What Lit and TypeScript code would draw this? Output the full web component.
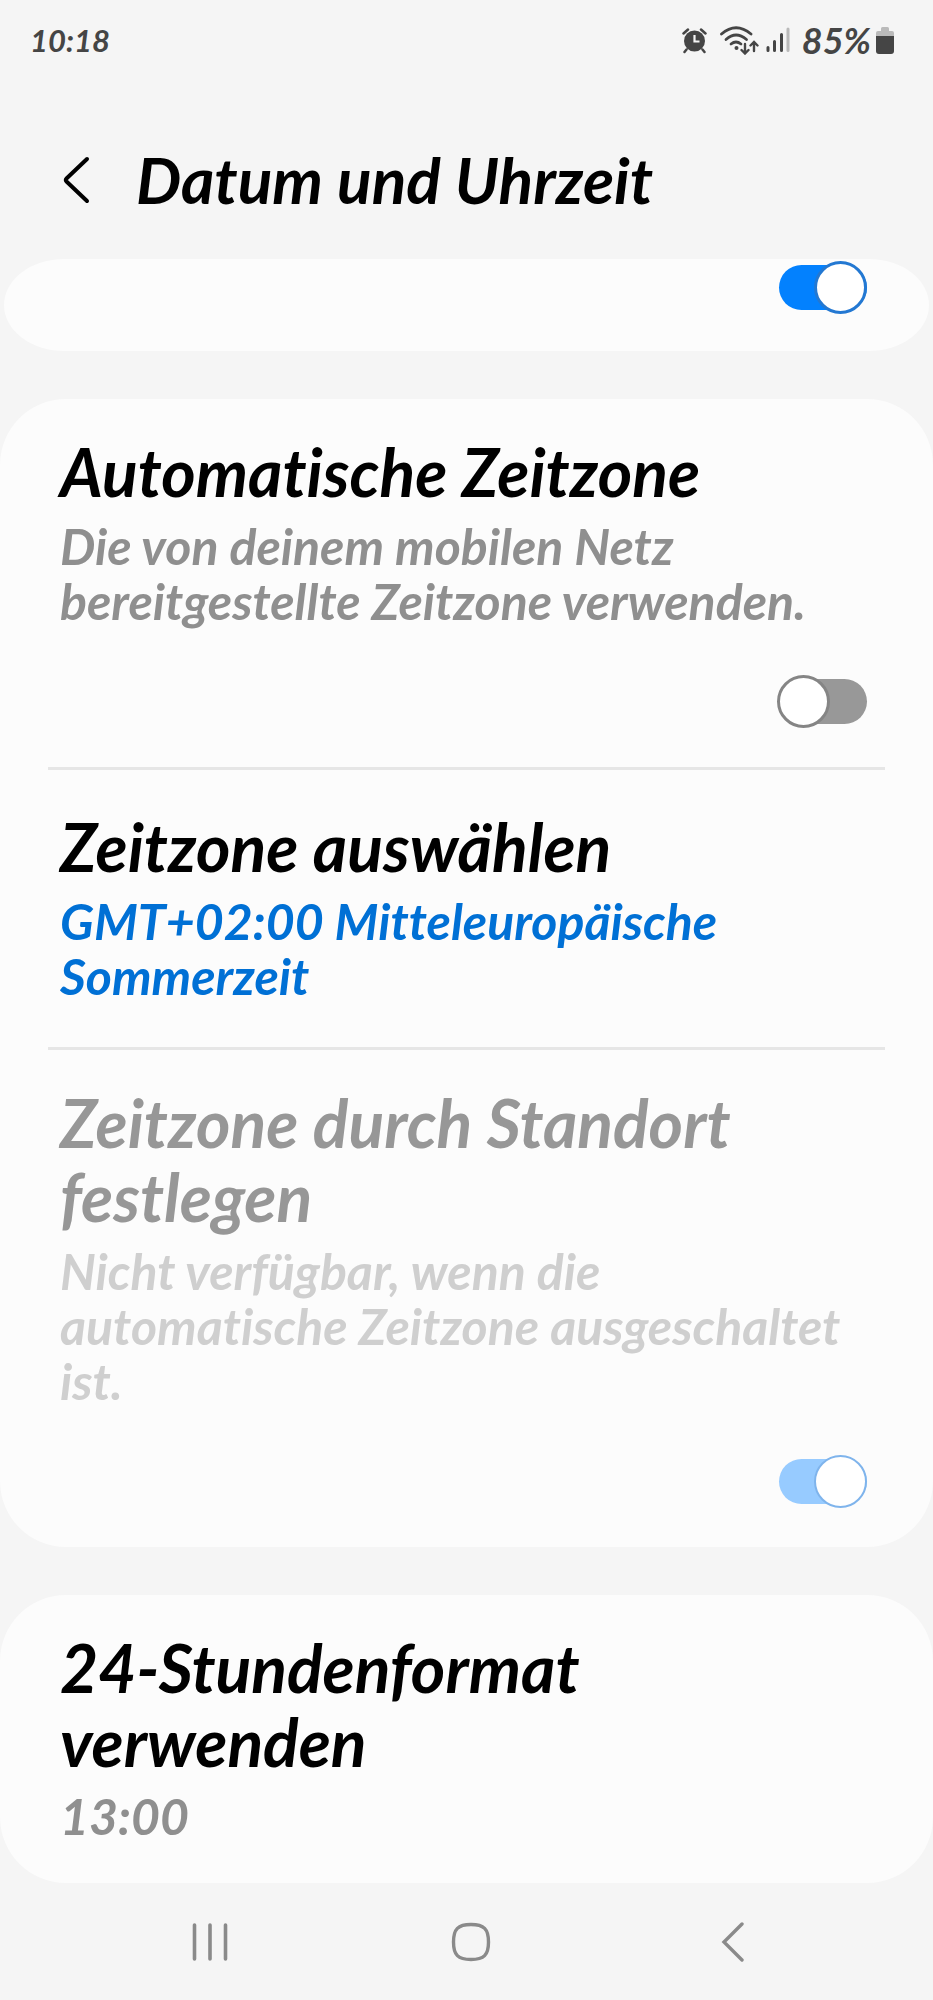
import { LitElement, html, css, svg } from "lit";
import { customElement, property } from "lit/decorators.js";
import { classMap } from "lit/directives/class-map.js";

@customElement("toggle-switch")
class ToggleSwitch extends LitElement {
  @property({ type: Boolean }) checked = false;
  @property({ type: Boolean }) disabled = false;
  @property() label = "";

  static styles = css`
    :host {
      display: block;
    }
    .switch {
      position: relative;
      display: flex;
      justify-content: flex-start;
      align-items: center;
      box-sizing: border-box;
      width: 90px;
      height: 53px;
      margin: 0;
      appearance: none;
      background: none;
      cursor: pointer;
    }
    .switch::before {
      content: "";
      position: absolute;
      inset: 4px 0 4px 2px;
      border-radius: 23px;
      background: #989898;
    }
    .switch::after {
      content: "";
      position: relative;
      box-sizing: border-box;
      width: 53px;
      height: 53px;
      border: 3px solid #858585;
      border-radius: 50%;
      background: #fff;
    }
    .switch:checked {
      justify-content: flex-end;
    }
    .switch:checked::before {
      background: #0381fe;
    }
    .switch:checked::after {
      border-color: #2378d2;
    }
    .switch:disabled {
      cursor: default;
    }
    .switch:disabled::before {
      background: #97cbff;
    }
    .switch:disabled::after {
      border: 2px solid #7fb4ec;
    }
  `;

  render() {
    return html`<input
      class="switch"
      type="checkbox"
      role="switch"
      aria-label=${this.label}
      .checked=${this.checked}
      ?disabled=${this.disabled}
    />`;
  }
}

@customElement("setting-row")
class SettingRow extends LitElement {
  @property() heading = "";
  @property() summary = "";
  @property({ type: Boolean }) accent = false;
  @property({ type: Boolean }) disabled = false;
  @property({ type: Boolean }) roomy = false;
  /** "on", "off", or empty for a row without a switch */
  @property() toggle = "";

  static styles = css`
    :host {
      display: block;
    }
    .row {
      display: flex;
      flex-direction: column;
      box-sizing: border-box;
      width: 100%;
      padding: 36px 66px 39px 60px;
      border: 0;
      background: none;
      color: #000;
      font: inherit;
      text-align: left;
    }
    .roomy {
      padding-top: 40px;
      padding-bottom: 43px;
    }
    .heading {
      font-size: 66px;
      font-weight: 700;
      line-height: 74px;
    }
    .summary {
      margin-top: 10px;
      color: #8f8f8f;
      font-size: 50px;
      font-weight: 700;
      line-height: 55px;
    }
    .accent .summary {
      color: #0070d5;
    }
    .disabled .heading {
      color: #979797;
    }
    .disabled .summary {
      color: #cfcfcf;
    }
    .toggle {
      align-self: flex-end;
      margin-top: 46px;
    }
  `;

  render() {
    const classes = classMap({
      row: true,
      accent: this.accent,
      disabled: this.disabled,
      roomy: this.roomy,
    });
    const text = html`<span class="heading">${this.heading}</span>
      <span class="summary">${this.summary}</span>`;
    if (!this.toggle) {
      return html`<button class=${classes} type="button">${text}</button>`;
    }
    return html`<div class=${classes}>
      ${text}
      <toggle-switch
        class="toggle"
        label=${this.heading}
        ?checked=${this.toggle === "on"}
        ?disabled=${this.disabled}
      ></toggle-switch>
    </div>`;
  }
}

const alarmIcon = svg`
  <circle cx="12.5" cy="14" r="10.5" fill="#454545"/>
  <path d="M1.5 6.5 6 2.5M23.5 6.5 19 2.5M4.5 22.5 2.5 25M20.5 22.5 22.5 25" stroke="#454545" stroke-width="2.5" stroke-linecap="round"/>
  <path d="M12.5 8v6.500h5" stroke="#f5f5f5" stroke-width="2.2" fill="none"/>`;

const wifiIcon = svg`
  <g fill="none" stroke="#454545" stroke-width="2.8" stroke-linecap="round">
    <path d="M1.5 8Q16 -4.500 31 8"/>
    <path d="M6 13.500Q16 4.500 26.500 13.500"/>
    <path d="M11 18Q16 14 21 18"/>
    <path d="M25 18v9M21.500 24 25 27.500 28.500 24M34 25v-8M30.500 19.500 34 16 37.500 19.500" stroke-width="2.4"/>
  </g>
  <circle cx="16.5" cy="22" r="2" fill="#454545"/>`;

const signalIcon = svg`
  <g stroke-width="3" stroke-linecap="round">
    <path d="M2 20.500v3M8.500 14.500v9M15.500 7.500v16" stroke="#454545"/>
    <path d="M22 2v21.500" stroke="#bababa"/>
  </g>`;

const batteryIcon = svg`
  <path d="M0 9V6a2 2 0 0 1 2-2h3V1.500Q5 0 6.500 0h5Q13 0 13 1.500V4h3a2 2 0 0 1 2 2v3z" fill="#bababa"/>
  <path d="M0 9h18v15a3 3 0 0 1-3 3H3a3 3 0 0 1-3-3z" fill="#454545"/>`;

@customElement("app-root")
class AppRoot extends LitElement {
  static styles = css`
    :host {
      display: flex;
      flex-direction: column;
      min-height: 100vh;
      background: #f5f5f5;
      color: #000;
      font-family: Lato, "Open Sans", sans-serif;
      font-style: italic;
      font-variant-ligatures: none;
    }
    .status {
      display: flex;
      justify-content: space-between;
      align-items: center;
      height: 80px;
      padding: 0 39px 0 30px;
      color: #454545;
      font-size: 31px;
      font-weight: 700;
    }
    .indicators {
      display: flex;
      align-items: center;
    }
    .wifi {
      margin: 0 7px 0 13px;
    }
    .level {
      margin: 0 5px 0 12px;
      font-size: 36px;
    }
    .header {
      display: flex;
      align-items: center;
      gap: 42px;
      padding: 62px 60px 41px 60px;
    }
    .icon-button {
      display: flex;
      justify-content: center;
      align-items: center;
      padding: 0;
      border: 0;
      background: none;
    }
    .title {
      margin: 0;
      font-size: 64px;
      font-weight: 700;
      line-height: 76px;
    }
    .cards {
      display: flex;
      flex-direction: column;
      flex: 1;
      gap: 48px;
    }
    .card {
      border-radius: 66px;
      background: #fcfcfc;
    }
    .clipped {
      display: flex;
      justify-content: flex-end;
      margin: 0 4px;
      padding: 2px 62px 37px;
      border-radius: 60px / 46px;
    }
    .divider {
      height: 3px;
      margin: 0 48px;
      border: 0;
      background: #e6e6e6;
    }
    .nav {
      display: grid;
      grid-template-columns: repeat(3, 1fr);
      height: 116px;
      padding: 0 71px 0 79px;
    }
  `;

  render() {
    return html`
      <div class="status">
        <span>10:18</span>
        <div class="indicators">
          <svg width="25" height="27" viewBox="0 0 25 27" aria-hidden="true">${alarmIcon}</svg>
          <svg class="wifi" width="39" height="29" viewBox="0 0 39 29" aria-hidden="true">${wifiIcon}</svg>
          <svg width="24" height="26" viewBox="0 0 24 26" aria-hidden="true">${signalIcon}</svg>
          <span class="level">85%</span>
          <svg width="18" height="27" viewBox="0 0 18 27" aria-hidden="true">${batteryIcon}</svg>
        </div>
      </div>
      <header class="header">
        <button class="icon-button" type="button" aria-label="Zurück">
          <svg width="34" height="48" viewBox="0 0 34 48" fill="none" stroke="#000" stroke-width="4" stroke-linecap="round" stroke-linejoin="round">
            <path d="M27 3 6.500 22.500Q5 24 6.500 25.500L27 45" />
          </svg>
        </button>
        <h1 class="title">Datum und Uhrzeit</h1>
      </header>
      <main class="cards">
        <section class="card clipped">
          <toggle-switch checked label="Automatisch"></toggle-switch>
        </section>
        <section class="card">
          <setting-row
            heading="Automatische Zeitzone"
            summary="Die von deinem mobilen Netz bereitgestellte Zeitzone verwenden."
            toggle="off"
          ></setting-row>
          <hr class="divider" />
          <setting-row
            heading="Zeitzone auswählen"
            summary="GMT+02:00 Mitteleuropäische Sommerzeit"
            accent
            roomy
          ></setting-row>
          <hr class="divider" />
          <setting-row
            heading="Zeitzone durch Standort festlegen"
            summary="Nicht verfügbar, wenn die automatische Zeitzone ausgeschaltet ist."
            toggle="on"
            disabled
          ></setting-row>
        </section>
        <section class="card">
          <setting-row heading="24-Stundenformat verwenden" summary="13:00"></setting-row>
        </section>
      </main>
      <nav class="nav">
        <button class="icon-button" type="button" aria-label="Letzte Apps">
          <svg width="40" height="40" viewBox="0 0 40 40" stroke="#8a8a8a" stroke-width="3.6" stroke-linecap="round">
            <path d="M4.500 3v34M20 3v34M35.500 3v34" />
          </svg>
        </button>
        <button class="icon-button" type="button" aria-label="Startseite">
          <svg width="40" height="40" viewBox="0 0 40 40" fill="none" stroke="#8a8a8a" stroke-width="3.4">
            <path d="M20 2.500C33 2.500 37.500 7 37.500 20S33 37.500 20 37.500 2.500 33 2.500 20 7 2.500 20 2.500z" />
          </svg>
        </button>
        <button class="icon-button" type="button" aria-label="Zurück">
          <svg width="40" height="40" viewBox="0 0 40 40" fill="none" stroke="#8a8a8a" stroke-width="3.4" stroke-linecap="round">
            <path d="M30 2 12 20l18 18" />
          </svg>
        </button>
      </nav>
    `;
  }
}
